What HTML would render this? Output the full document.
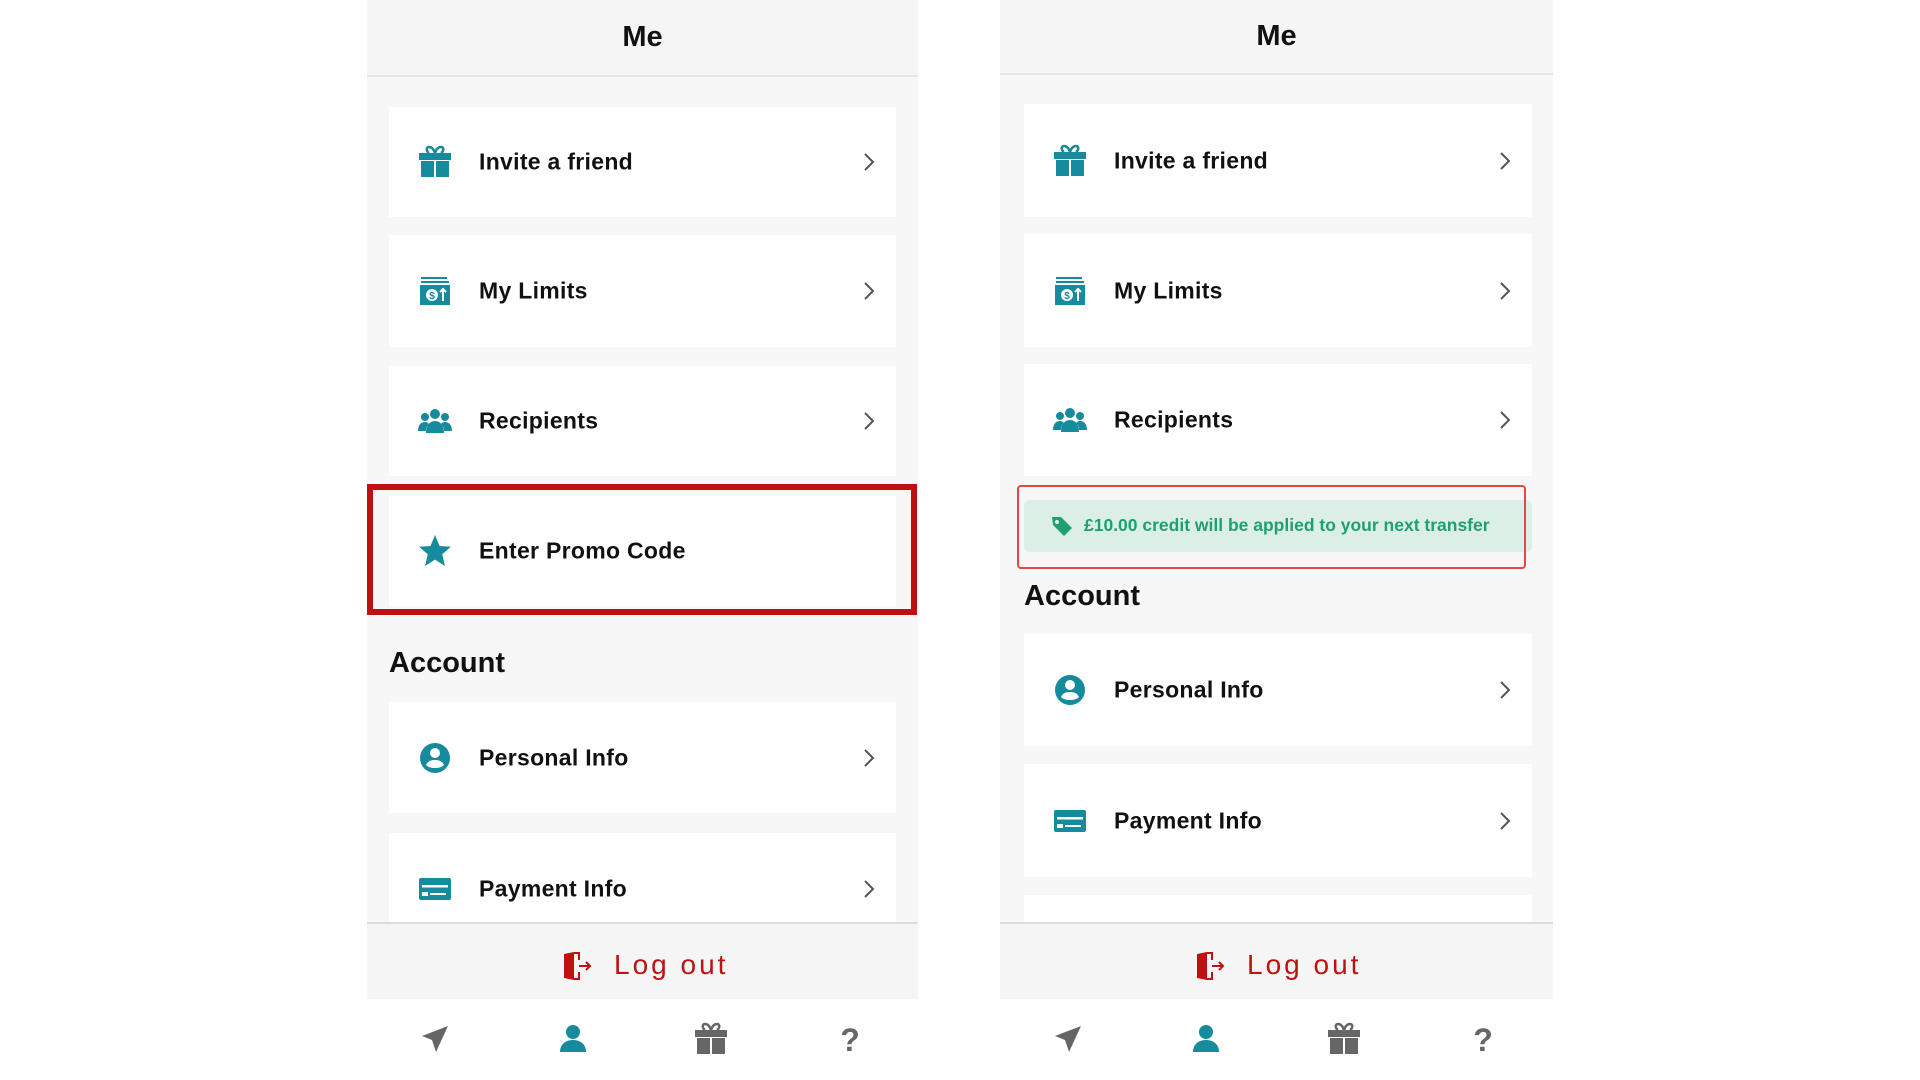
<!DOCTYPE html>
<html><head><meta charset="utf-8"><style>
*{margin:0;padding:0;box-sizing:border-box}
body{width:1920px;height:1080px;background:#fff;position:relative;overflow:hidden;font-family:"Liberation Sans",Arial,sans-serif}
.panel{position:absolute;top:0;height:1080px;background:#f7f7f7;overflow:hidden}
.hdr{position:absolute;left:0;right:0;top:0;background:#f5f5f5;border-bottom:2px solid #e6e6e6;text-align:center;font-weight:bold;font-size:29px;color:#111}
.card{position:absolute;background:#fff}
.card .ic{position:absolute;left:28px;top:50%;transform:translateY(-50%);width:36px;height:36px}
.card .t{position:absolute;left:90px;top:50%;transform:translateY(-50%);font-size:23px;font-weight:bold;color:#111;letter-spacing:0.3px}
.card .ch{position:absolute;right:20px;top:50%;transform:translateY(-50%);width:14px;height:20px}
.acc{position:absolute;font-size:29px;font-weight:bold;color:#111}
.logout{position:absolute;left:0;right:0;top:922px;height:77px;background:#f5f5f5;border-top:2px solid #ddd}
.logout span{position:absolute;top:25px;font-size:28px;color:#c01010;letter-spacing:3px}
.nav{position:absolute;left:0;right:0;top:999px;height:81px;background:#fff}
.nav svg{position:absolute;top:24px}
</style></head><body>
<svg width="0" height="0" style="position:absolute">
<defs>
<symbol id="gift" viewBox="0 0 36 36"><path d="M12 3c3 0 5 3 6 6 1-3 3-6 6-6 3 0 3 4 0 6" fill="none" stroke="currentColor" stroke-width="2.5"/><path d="M12 3c-3 0-3 4 0 6" fill="none" stroke="currentColor" stroke-width="2.5"/><rect x="2" y="9" width="32" height="7" fill="currentColor"/><rect x="4" y="17" width="13" height="16" fill="currentColor"/><rect x="19" y="17" width="13" height="16" fill="currentColor"/></symbol>
<symbol id="lim" viewBox="0 0 36 36"><rect x="4" y="4" width="26" height="2" fill="currentColor"/><rect x="4" y="8" width="28" height="2" fill="currentColor"/><rect x="3" y="12" width="30" height="20" fill="currentColor"/><circle cx="15" cy="22" r="6" fill="#fff"/><text x="15" y="26" font-size="10" font-weight="bold" text-anchor="middle" fill="currentColor" font-family="Liberation Sans">$</text><path d="M26 28V16M23 19l3-3 3 3" stroke="#fff" stroke-width="2" fill="none"/></symbol>
<symbol id="rec" viewBox="0 0 36 36"><circle cx="18" cy="11" r="5" fill="currentColor"/><circle cx="8" cy="14" r="4" fill="currentColor"/><circle cx="28" cy="14" r="4" fill="currentColor"/><path d="M9 30c0-8 4-12 9-12s9 4 9 12z" fill="currentColor"/><path d="M1 28c0-6 3-9 7-9 2 0 3 1 4 2-2 2-3 4-3 7z" fill="currentColor"/><path d="M35 28c0-6-3-9-7-9-2 0-3 1-4 2 2 2 3 4 3 7z" fill="currentColor"/></symbol>
<symbol id="star" viewBox="0 0 36 36"><path d="M18 2l4.5 11 11.5.8-8.8 7.5 2.8 11.7L18 26.6 8 33l2.8-11.7L2 13.8l11.5-.8z" fill="currentColor"/></symbol>
<symbol id="user" viewBox="0 0 36 36"><circle cx="18" cy="18" r="15" fill="currentColor"/><circle cx="18" cy="13" r="5" fill="#fff"/><path d="M9 25c2-4 5-5 9-5s7 1 9 5c-2 2-5 3-9 3s-7-1-9-3z" fill="#fff"/></symbol>
<symbol id="card" viewBox="0 0 36 36"><rect x="2" y="7" width="32" height="22" rx="2" fill="currentColor"/><rect x="5" y="14" width="26" height="2.5" fill="#fff"/><rect x="5" y="21" width="6" height="4" fill="#fff"/><rect x="13" y="22" width="16" height="2" fill="#fff"/></symbol>
<symbol id="chev" viewBox="0 0 14 20"><path d="M3 2l8 8-8 8" fill="none" stroke="#555" stroke-width="2"/></symbol>
<symbol id="door" viewBox="0 0 32 32"><path d="M3 4l10-2v28l-10-2z" fill="#c01010"/><path d="M13 3h5v7M18 22v7h-5" fill="none" stroke="#c01010" stroke-width="2"/><path d="M18 16h11M25 12l4 4-4 4" fill="none" stroke="#c01010" stroke-width="2"/></symbol>
<symbol id="send" viewBox="0 0 32 32"><path d="M29 3L3 13l10 4 4 12z" fill="#666"/></symbol>
<symbol id="person" viewBox="0 0 32 32"><circle cx="16" cy="9" r="7" fill="#178b9e"/><path d="M3 29c0-8 6-12 13-12s13 4 13 12z" fill="#178b9e"/></symbol>
<symbol id="q" viewBox="0 0 32 32"><text x="16" y="28" font-size="32" font-weight="bold" text-anchor="middle" fill="#666" font-family="Liberation Sans">?</text></symbol>
</defs></svg>

<!-- LEFT PANEL -->
<div class="panel" style="left:367px;width:551px">
 <div class="hdr" style="height:77px;line-height:74px">Me</div>
 <div class="card" style="left:22px;width:507px;top:107px;height:110px;color:#178b9e"><svg class="ic"><use href="#gift"/></svg><div class="t">Invite a friend</div><svg class="ch"><use href="#chev"/></svg></div>
 <div class="card" style="left:22px;width:507px;top:235px;height:112px;color:#178b9e"><svg class="ic"><use href="#lim"/></svg><div class="t">My Limits</div><svg class="ch"><use href="#chev"/></svg></div>
 <div class="card" style="left:22px;width:507px;top:366px;height:110px;color:#178b9e"><svg class="ic"><use href="#rec"/></svg><div class="t">Recipients</div><svg class="ch"><use href="#chev"/></svg></div>
 <div class="card" style="left:22px;width:507px;top:496px;height:110px;color:#178b9e"><svg class="ic"><use href="#star"/></svg><div class="t">Enter Promo Code</div></div>
 <div style="position:absolute;left:0;top:484px;width:550px;height:131px;border:6px solid #c00f0f"></div>
 <div class="acc" style="left:22px;top:647px">Account</div>
 <div class="card" style="left:22px;width:507px;top:702px;height:111px;color:#178b9e"><svg class="ic"><use href="#user"/></svg><div class="t">Personal Info</div><svg class="ch"><use href="#chev"/></svg></div>
 <div class="card" style="left:22px;width:507px;top:833px;height:111px;color:#178b9e"><svg class="ic"><use href="#card"/></svg><div class="t">Payment Info</div><svg class="ch"><use href="#chev"/></svg></div>
 <div class="logout"><svg style="position:absolute;left:194px;top:26px;width:32px;height:32px"><use href="#door"/></svg><span style="left:247px">Log out</span></div>
 <div class="nav">
  <svg style="left:52px;width:32px;height:32px"><use href="#send"/></svg>
  <svg style="left:190px;width:32px;height:32px"><use href="#person"/></svg>
  <svg style="left:326px;width:36px;height:36px;top:22px;color:#666"><use href="#gift"/></svg>
  <svg style="left:467px;width:32px;height:32px"><use href="#q"/></svg>
 </div>
</div>

<!-- RIGHT PANEL -->
<div class="panel" style="left:1000px;width:553px">
 <div class="hdr" style="height:75px;line-height:72px">Me</div>
 <div class="card" style="left:24px;width:508px;top:104px;height:113px;color:#178b9e"><svg class="ic"><use href="#gift"/></svg><div class="t">Invite a friend</div><svg class="ch"><use href="#chev"/></svg></div>
 <div class="card" style="left:24px;width:508px;top:234px;height:113px;color:#178b9e"><svg class="ic"><use href="#lim"/></svg><div class="t">My Limits</div><svg class="ch"><use href="#chev"/></svg></div>
 <div class="card" style="left:24px;width:508px;top:364px;height:112px;color:#178b9e"><svg class="ic"><use href="#rec"/></svg><div class="t">Recipients</div><svg class="ch"><use href="#chev"/></svg></div>
 <div style="position:absolute;left:24px;width:508px;top:500px;height:52px;background:#dcefe7;border-radius:6px">
  <svg style="position:absolute;left:26px;top:14px;width:24px;height:24px" viewBox="0 0 24 24"><path d="M2 3h9l11 11-8 8L3 11z" fill="#1fa070"/><circle cx="7" cy="8" r="2" fill="#dcefe7"/></svg>
  <div style="position:absolute;left:60px;top:15px;font-size:17.5px;font-weight:bold;color:#1fa070">£10.00 credit will be applied to your next transfer</div>
 </div>
 <div style="position:absolute;left:17px;top:485px;width:509px;height:84px;border:2.5px solid #e84545;border-radius:4px"></div>
 <div class="acc" style="left:24px;top:580px">Account</div>
 <div class="card" style="left:24px;width:508px;top:634px;height:112px;color:#178b9e"><svg class="ic"><use href="#user"/></svg><div class="t">Personal Info</div><svg class="ch"><use href="#chev"/></svg></div>
 <div class="card" style="left:24px;width:508px;top:764px;height:113px;color:#178b9e"><svg class="ic"><use href="#card"/></svg><div class="t">Payment Info</div><svg class="ch"><use href="#chev"/></svg></div>
 <div class="card" style="left:24px;width:508px;top:895px;height:40px"></div>
 <div class="logout"><svg style="position:absolute;left:194px;top:26px;width:32px;height:32px"><use href="#door"/></svg><span style="left:247px">Log out</span></div>
 <div class="nav">
  <svg style="left:52px;width:32px;height:32px"><use href="#send"/></svg>
  <svg style="left:190px;width:32px;height:32px"><use href="#person"/></svg>
  <svg style="left:326px;width:36px;height:36px;top:22px;color:#666"><use href="#gift"/></svg>
  <svg style="left:467px;width:32px;height:32px"><use href="#q"/></svg>
 </div>
</div>
</body></html>
